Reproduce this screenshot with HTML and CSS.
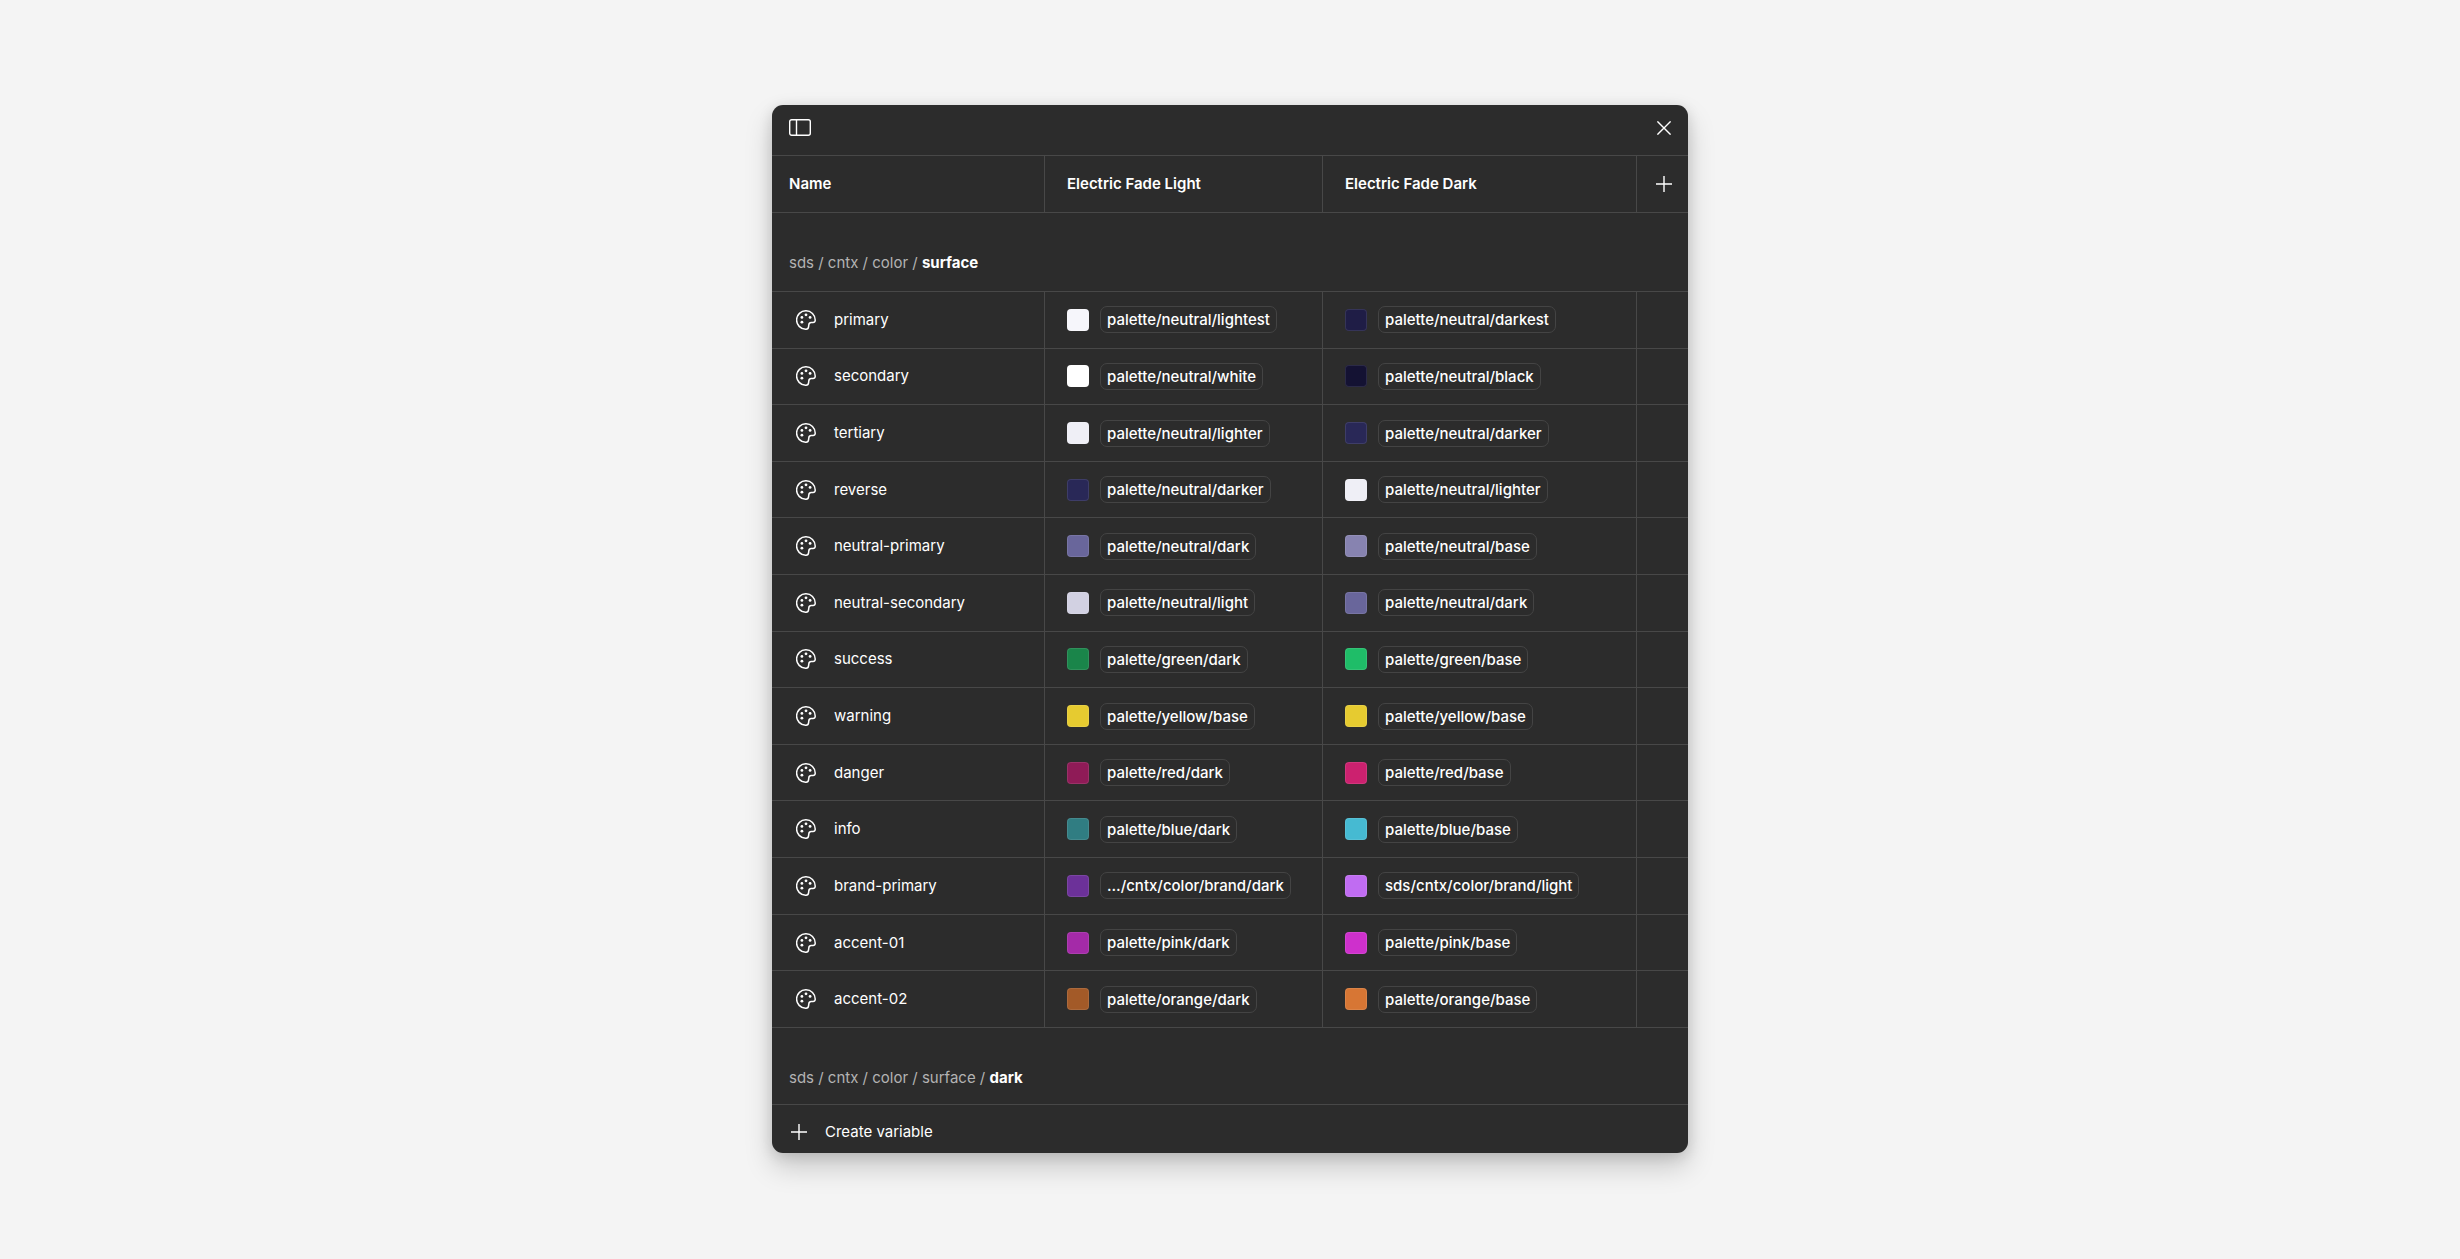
FILE: index.html
```html
<!DOCTYPE html>
<html lang="en">
<head>
  <meta charset="UTF-8">
  <meta name="viewport" content="width=device-width, initial-scale=1.0">
  <title>Variables</title>
  <link rel="stylesheet" href="styles.css">
</head>
<body>

  <!-- Shared icons -->
  <svg class="sprite" aria-hidden="true">
    <symbol id="palette" viewBox="0 0 20 20">
      <path d="M10 .8A9.2 9.2 0 1 0 9.6 19.2C11.6 19.4 12.4 18.4 12.6 16.6L12.8 14.8C13 13.2 13.8 12.6 15.2 12.6H17C18.6 12.6 19.3 11.4 19.2 10A9.2 9.2 0 0 0 10 .8Z" fill="none" stroke="currentColor" stroke-width="1.5"/>
      <circle cx="10" cy="4.8" r="1.4" fill="currentColor"/>
      <circle cx="5.9" cy="7.4" r="1.4" fill="currentColor"/>
      <circle cx="14.1" cy="7.4" r="1.4" fill="currentColor"/>
      <circle cx="5.9" cy="12.2" r="1.4" fill="currentColor"/>
    </symbol>
    <symbol id="plus" viewBox="0 0 16 16">
      <path d="M8 0V16M0 8H16" fill="none" stroke="currentColor" stroke-width="1.4"/>
    </symbol>
  </svg>

  <main class="panel">
    <header class="toolbar">
      <button type="button" class="icon-btn" aria-label="Toggle sidebar">
        <svg width="22" height="17" viewBox="0 0 22 17" fill="none" stroke="currentColor" stroke-width="1.4">
          <rect x=".7" y=".7" width="20.6" height="15.6" rx="2"/>
          <path d="M7.5 .7V16.3"/>
        </svg>
      </button>
      <button type="button" class="icon-btn" aria-label="Close">
        <svg width="14" height="14" viewBox="0 0 14 14" fill="none" stroke="currentColor" stroke-width="1.4">
          <path d="M.4 .4L13.6 13.6M13.6 .4L.4 13.6"/>
        </svg>
      </button>
    </header>

    <table class="variables">
      <colgroup>
        <col class="col-name">
        <col class="col-light">
        <col class="col-dark">
        <col class="col-add">
      </colgroup>
      <thead>
        <tr>
          <th scope="col">Name</th>
          <th scope="col">Electric Fade Light</th>
          <th scope="col">Electric Fade Dark</th>
          <th class="add-cell"><button type="button" class="icon-btn" aria-label="Add mode"><svg width="16" height="16"><use href="#plus"/></svg></button></th>
        </tr>
      </thead>
      <tbody>
        <tr class="group">
          <td colspan="4">sds / cntx / color / <strong>surface</strong></td>
        </tr>
        <tr>
          <td><div class="name"><svg class="type"><use href="#palette"/></svg>primary</div></td>
          <td><div class="value"><span class="swatch neutral-lightest"></span><span class="alias">palette/neutral/lightest</span></div></td>
          <td><div class="value"><span class="swatch neutral-darkest"></span><span class="alias">palette/neutral/darkest</span></div></td>
          <td></td>
        </tr>
        <tr>
          <td><div class="name"><svg class="type"><use href="#palette"/></svg>secondary</div></td>
          <td><div class="value"><span class="swatch neutral-white"></span><span class="alias">palette/neutral/white</span></div></td>
          <td><div class="value"><span class="swatch neutral-black"></span><span class="alias">palette/neutral/black</span></div></td>
          <td></td>
        </tr>
        <tr>
          <td><div class="name"><svg class="type"><use href="#palette"/></svg>tertiary</div></td>
          <td><div class="value"><span class="swatch neutral-lighter"></span><span class="alias">palette/neutral/lighter</span></div></td>
          <td><div class="value"><span class="swatch neutral-darker"></span><span class="alias">palette/neutral/darker</span></div></td>
          <td></td>
        </tr>
        <tr>
          <td><div class="name"><svg class="type"><use href="#palette"/></svg>reverse</div></td>
          <td><div class="value"><span class="swatch neutral-darker"></span><span class="alias">palette/neutral/darker</span></div></td>
          <td><div class="value"><span class="swatch neutral-lighter"></span><span class="alias">palette/neutral/lighter</span></div></td>
          <td></td>
        </tr>
        <tr>
          <td><div class="name"><svg class="type"><use href="#palette"/></svg>neutral-primary</div></td>
          <td><div class="value"><span class="swatch neutral-dark"></span><span class="alias">palette/neutral/dark</span></div></td>
          <td><div class="value"><span class="swatch neutral-base"></span><span class="alias">palette/neutral/base</span></div></td>
          <td></td>
        </tr>
        <tr>
          <td><div class="name"><svg class="type"><use href="#palette"/></svg>neutral-secondary</div></td>
          <td><div class="value"><span class="swatch neutral-light"></span><span class="alias">palette/neutral/light</span></div></td>
          <td><div class="value"><span class="swatch neutral-dark"></span><span class="alias">palette/neutral/dark</span></div></td>
          <td></td>
        </tr>
        <tr>
          <td><div class="name"><svg class="type"><use href="#palette"/></svg>success</div></td>
          <td><div class="value"><span class="swatch green-dark"></span><span class="alias">palette/green/dark</span></div></td>
          <td><div class="value"><span class="swatch green-base"></span><span class="alias">palette/green/base</span></div></td>
          <td></td>
        </tr>
        <tr>
          <td><div class="name"><svg class="type"><use href="#palette"/></svg>warning</div></td>
          <td><div class="value"><span class="swatch yellow-base"></span><span class="alias">palette/yellow/base</span></div></td>
          <td><div class="value"><span class="swatch yellow-base"></span><span class="alias">palette/yellow/base</span></div></td>
          <td></td>
        </tr>
        <tr>
          <td><div class="name"><svg class="type"><use href="#palette"/></svg>danger</div></td>
          <td><div class="value"><span class="swatch red-dark"></span><span class="alias">palette/red/dark</span></div></td>
          <td><div class="value"><span class="swatch red-base"></span><span class="alias">palette/red/base</span></div></td>
          <td></td>
        </tr>
        <tr>
          <td><div class="name"><svg class="type"><use href="#palette"/></svg>info</div></td>
          <td><div class="value"><span class="swatch blue-dark"></span><span class="alias">palette/blue/dark</span></div></td>
          <td><div class="value"><span class="swatch blue-base"></span><span class="alias">palette/blue/base</span></div></td>
          <td></td>
        </tr>
        <tr>
          <td><div class="name"><svg class="type"><use href="#palette"/></svg>brand-primary</div></td>
          <td><div class="value"><span class="swatch brand-dark"></span><span class="alias">…/cntx/color/brand/dark</span></div></td>
          <td><div class="value"><span class="swatch brand-light"></span><span class="alias">sds/cntx/color/brand/light</span></div></td>
          <td></td>
        </tr>
        <tr>
          <td><div class="name"><svg class="type"><use href="#palette"/></svg>accent-01</div></td>
          <td><div class="value"><span class="swatch pink-dark"></span><span class="alias">palette/pink/dark</span></div></td>
          <td><div class="value"><span class="swatch pink-base"></span><span class="alias">palette/pink/base</span></div></td>
          <td></td>
        </tr>
        <tr>
          <td><div class="name"><svg class="type"><use href="#palette"/></svg>accent-02</div></td>
          <td><div class="value"><span class="swatch orange-dark"></span><span class="alias">palette/orange/dark</span></div></td>
          <td><div class="value"><span class="swatch orange-base"></span><span class="alias">palette/orange/base</span></div></td>
          <td></td>
        </tr>
      </tbody>
    </table>

    <div class="next-group">sds / cntx / color / surface / <strong>dark</strong></div>

    <footer class="footer">
      <button type="button" class="create"><svg width="16" height="16"><use href="#plus"/></svg>Create variable</button>
    </footer>
  </main>

</body>
</html>
```
FILE: styles.css
```css
* {
  box-sizing: border-box;
}
body {
  margin: 0;
  padding-bottom: 1px;
  min-height: 100vh;
  display: flex;
  align-items: center;
  justify-content: center;
  background: #f4f4f4;
  color: #fff;
  font-family: Inter, sans-serif;
  font-size: 15px;
  line-height: 22px;
}
.sprite {
  display: none;
}
svg {
  display: block;
  flex: none;
}
button {
  background: none;
  border: none;
  padding: 0;
  color: inherit;
  font: inherit;
  cursor: pointer;
}
.icon-btn {
  display: block;
}

/* Panel */
.panel {
  width: 100%;
  max-width: 916px;
  background: #2c2c2c;
  border-radius: 11px;
  box-shadow: 0 3px 14px rgba(0,0,0,0.13), 0 14px 28px rgba(0,0,0,0.18);
}
.toolbar {
  display: flex;
  align-items: center;
  justify-content: space-between;
  padding: 14px 17px 19px;
  border-bottom: 1px solid #484848;
}

/* Table */
.variables {
  width: 100%;
  height: 872px;
  table-layout: fixed;
  border-collapse: separate;
  border-spacing: 0;
}
.col-name { width: 272px; }
.col-dark { width: 314px; }
.col-add { width: 52px; }
th,
td {
  padding: 0 0 0 22px;
  border-bottom: 1px solid #484848;
  border-left: 1px solid #484848;
  text-align: left;
  font-weight: 500;
}
th {
  height: 57px;
  font-weight: 600;
}
th:first-child,
td:first-child {
  padding-left: 17px;
  border-left: none;
}
th.add-cell {
  padding-left: 19px;
}
.group td {
  height: 79px;
  padding-top: 22px;
}
.group td,
.next-group {
  color: #b3b3b3;
  font-weight: 400;
}
strong {
  color: #fff;
  font-weight: 700;
}
.name,
.value {
  display: flex;
  align-items: center;
}
.name {
  gap: 18px;
  padding-left: 7px;
  font-weight: 400;
}
.type {
  width: 20px;
  height: 20px;
}
.value {
  gap: 11px;
}
.alias {
  padding: 2px 6px;
  border: 1px solid #444;
  border-radius: 7px;
  line-height: 21px;
  white-space: nowrap;
}

/* Swatches */
.swatch {
  width: 22px;
  height: 22px;
  border-radius: 4px;
  box-shadow: inset 0 0 0 1px rgba(255,255,255,0.1);
}
.neutral-white { background: #fff; }
.neutral-lightest { background: #f6f6fb; }
.neutral-lighter { background: #efeff6; }
.neutral-light { background: #d2d1e2; }
.neutral-base { background: #8783b0; }
.neutral-dark { background: #69669b; }
.neutral-darker { background: #292857; }
.neutral-darkest { background: #1f1d46; }
.neutral-black { background: #141233; }
.green-dark { background: #1a854a; }
.green-base { background: #1fbd68; }
.yellow-base { background: #e6cb30; }
.red-dark { background: #8f1b57; }
.red-base { background: #cc216f; }
.blue-dark { background: #307d82; }
.blue-base { background: #46bad2; }
.brand-dark { background: #6c3199; }
.brand-light { background: #c06cf2; }
.pink-dark { background: #a42aa8; }
.pink-base { background: #ce30cc; }
.orange-dark { background: #a35a28; }
.orange-base { background: #d77634; }

/* Bottom of the panel */
.next-group {
  padding: 39px 17px 15px;
  border-bottom: 1px solid #484848;
}
.footer {
  padding: 16px 19px 10px;
}
.create {
  display: flex;
  align-items: center;
  gap: 18px;
}
```
